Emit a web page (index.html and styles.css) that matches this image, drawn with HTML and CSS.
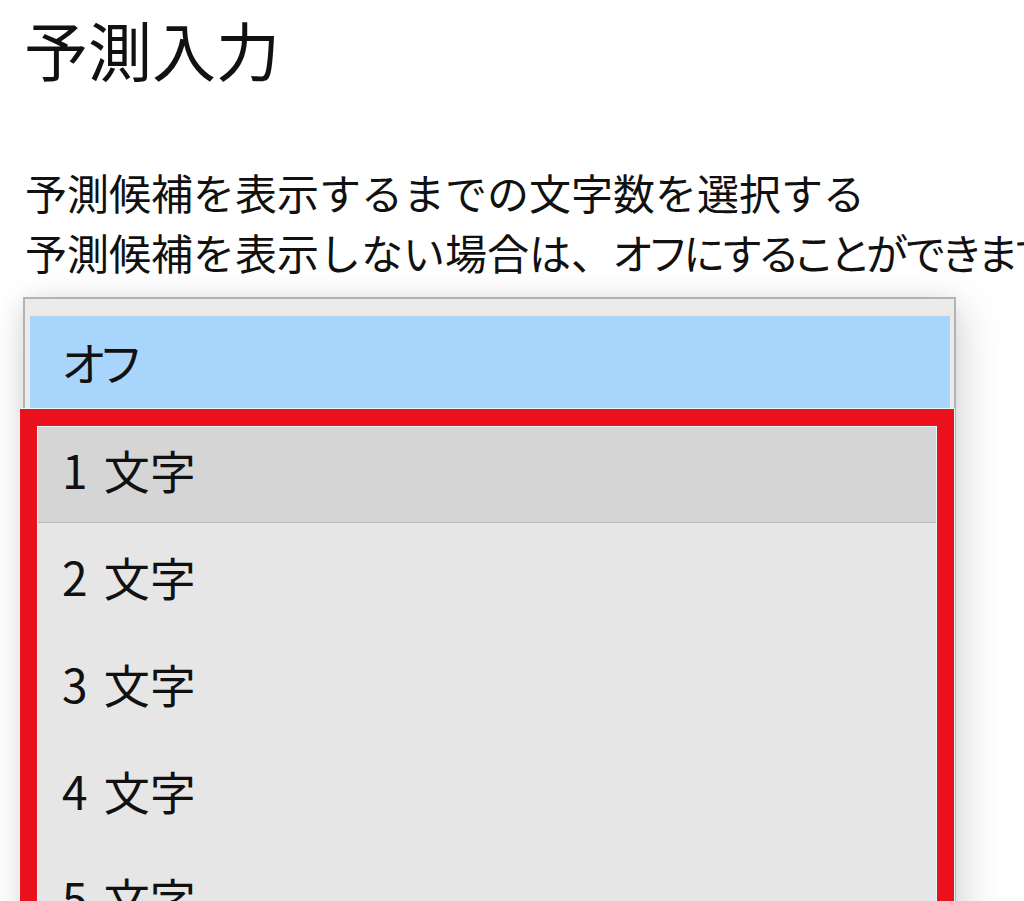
FILE: index.html
```html
<!DOCTYPE html>
<html lang="ja">
<head>
<meta charset="utf-8">
<title>予測入力</title>
<link rel="stylesheet" href="styles.css">
</head>
<body>
<main class="page">
  <h1 class="title">予測入力</h1>
  <p class="desc">予測候補を表示するまでの文字数を選択する<br>予測候補を表示しない場合は、<span class="prop tight">オフにすることができます</span></p>
  <div class="dropdown">
    <div class="strip"></div>
    <div class="opt selected"><span class="prop narrow">オフ</span></div>
    <ul class="list">
      <li class="opt hover">1 文字</li>
      <li class="opt">2 文字</li>
      <li class="opt">3 文字</li>
      <li class="opt">4 文字</li>
      <li class="opt">5 文字</li>
    </ul>
    <div class="mark"></div>
  </div>
</main>
</body>
</html>
```

FILE: styles.css
```css
html, body {
  margin: 0;
  padding: 0;
  background: #ffffff;
  overflow: hidden;
  height: 901px;
}

body {
  font-family: "Noto Sans CJK JP", "Noto Sans", sans-serif;
  color: #111111;
}

.page {
  padding-left: 21px;
}

.title {
  margin: 17px 0 0 3px;
  font-size: 64px;
  line-height: 63px;
  font-weight: 400;
  letter-spacing: 0;
}

.desc {
  margin: 82px 0 0 4px;
  font-size: 42px;
  line-height: 60px;
  white-space: nowrap;
}

.prop {
  font-feature-settings: "palt";
}

.tight {
  letter-spacing: -1.5px;
}

.narrow {
  letter-spacing: -3px;
}

.dropdown {
  position: relative;
  margin-top: 15px;
  margin-left: 2px;
  width: 933px;
  box-sizing: border-box;
  border: 2px solid #b3b3b3;
  border-bottom: none;
  background: #ebebeb;
  height: 700px;
  box-shadow: 8px 10px 40px rgba(0, 0, 0, 0.14), -4px 4px 22px rgba(0, 0, 0, 0.08);
}

.strip {
  height: 15px;
  border-bottom: 2px solid #f3e6dc;
}

.opt {
  font-size: 46px;
  line-height: 107px;
  height: 107px;
  padding-left: 37px;
  box-sizing: border-box;
  white-space: nowrap;
  word-spacing: 6px;
}

.selected {
  margin: 0 4px 0 5px;
  padding-left: 32px;
  height: 93px;
  line-height: 90px;
  background: #a7d5fb;
}

.list {
  list-style: none;
  margin: 0;
  padding: 7px 0 0 0;
  background: #e6e6e6;
}

.hover {
  background: #d5d5d5;
  border-bottom: 1px solid #b9b9b9;
}

.mark {
  position: absolute;
  left: -5px;
  top: 110px;
  width: 934px;
  height: 620px;
  box-sizing: border-box;
  border: 17px solid #ea111c;
  box-shadow: inset 0 0 0 1px #e3fafa, 0 0 0 1px #e3fafa;
  pointer-events: none;
}
```
